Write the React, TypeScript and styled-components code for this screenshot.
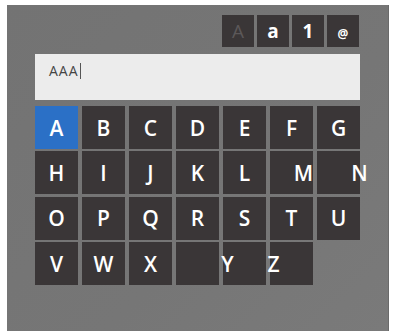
import React from "react";
import styled, { createGlobalStyle } from "styled-components";

const Global = createGlobalStyle`
  html, body { margin: 0; padding: 0; background: #ffffff; }
  body { font-family: "Open Sans", "Noto Sans", sans-serif; }
`;

const Page = styled.div`
  width: 393px;
  height: 334px;
  padding: 5px 4px 0 7px;
  box-sizing: border-box;
`;

const Panel = styled.div`
  width: 382px;
  height: 326px;
  box-sizing: border-box;
  background: linear-gradient(135deg, #737373 0%, #767676 60%, #7a7a7a 100%);
  border-right: 1px solid #6a6a6a;
  padding: 10px 28px 0 28px;
  display: flex;
  flex-direction: column;
`;

const Toolbar = styled.div`
  display: flex;
  justify-content: flex-end;
  gap: 3px;
  padding-right: 1px;
`;

const ModeButton = styled.div<{ $dim?: boolean; $small?: boolean }>`
  width: 32px;
  height: 32px;
  background: #3a3637;
  display: flex;
  align-items: center;
  justify-content: center;
  color: ${(p) => (p.$dim ? "#5c5859" : "#ffffff")};
  font-size: ${(p) => (p.$small ? "12px" : "19px")};
  font-weight: ${(p) => (p.$dim ? 400 : 700)};
  padding-top: ${(p) => (p.$small ? "4px" : "0")};
  box-sizing: border-box;
`;

const Field = styled.div`
  margin-top: 7px;
  height: 46px;
  background: #ececec;
  box-sizing: border-box;
  padding: 7px 0 0 14px;
  display: flex;
  align-items: flex-start;
  color: #444;
  font-size: 14px;
  letter-spacing: 1px;
  font-weight: 400;
`;

const Caret = styled.span`
  display: inline-block;
  width: 1px;
  height: 16px;
  background: #555;
  margin-top: 2px;
  margin-left: 1px;
`;

const Grid = styled.div`
  margin-top: 6px;
  width: 325px;
  display: grid;
  grid-template-columns: repeat(7, 1fr);
  grid-auto-rows: 43px;
  column-gap: 4px;
  row-gap: 2.4px;
`;

const Key = styled.div<{ $active?: boolean; $empty?: boolean }>`
  background: ${(p) => (p.$empty ? "transparent" : p.$active ? "#2b70c6" : "#3a3637")};
  display: flex;
  align-items: center;
  justify-content: center;
  color: #ffffff;
  font-size: 21px;
  font-weight: 600;
  overflow: visible;
`;

const Label = styled.span<{ $shift?: number }>`
  display: inline-block;
  transform: translateX(${(p) => p.$shift ?? 0}px);
`;

type K = { l: string; shift?: number; active?: boolean; empty?: boolean };

const keys: K[] = [
  { l: "A", active: true },
  { l: "B" },
  { l: "C" },
  { l: "D" },
  { l: "E" },
  { l: "F" },
  { l: "G" },
  { l: "H" },
  { l: "I" },
  { l: "J" },
  { l: "K" },
  { l: "L" },
  { l: "M", shift: 12 },
  { l: "N", shift: 21 },
  { l: "O" },
  { l: "P" },
  { l: "Q" },
  { l: "R" },
  { l: "S" },
  { l: "T" },
  { l: "U" },
  { l: "V" },
  { l: "W" },
  { l: "X" },
  { l: "" },
  { l: "Y", shift: -17 },
  { l: "Z", shift: -18 },
  { l: "", empty: true },
];

export default function App() {
  return (
    <>
      <Global />
      <Page>
        <Panel>
          <Toolbar>
            <ModeButton $dim>A</ModeButton>
            <ModeButton>a</ModeButton>
            <ModeButton>1</ModeButton>
            <ModeButton $small>@</ModeButton>
          </Toolbar>
          <Field>
            AAA<Caret />
          </Field>
          <Grid>
            {keys.map((k, i) => (
              <Key key={i} $active={k.active} $empty={k.empty}>
                <Label $shift={k.shift}>{k.l}</Label>
              </Key>
            ))}
          </Grid>
        </Panel>
      </Page>
    </>
  );
}
